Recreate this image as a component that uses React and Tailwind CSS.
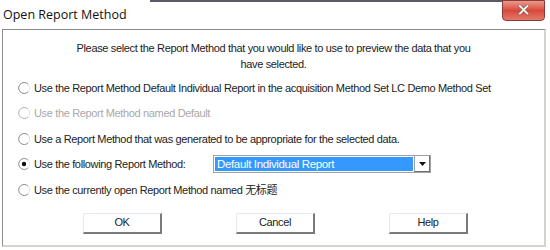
import React from 'react'

function Radio({ checked, disabled }) {
  return (
    <svg width="12" height="12" viewBox="0 0 12 12" className="shrink-0">
      <path d="M10.2 2.2A5.5 5.5 0 1 0 10.2 9.8" fill="none" stroke={disabled ? '#b0b0b0' : '#8a8a8a'} strokeWidth="1" />
      <path d="M10.2 2.2A5.5 5.5 0 0 1 10.2 9.8" fill="none" stroke="#e4e4e4" strokeWidth="1" />
      <circle cx="6" cy="6" r="4.3" fill="#fff" />
      {checked && <circle cx="6" cy="6" r="2.2" fill="#111" />}
    </svg>
  )
}

function Option({ checked, disabled, children }) {
  return (
    <div className="flex items-center h-[25.5px] pl-[15px]">
      <Radio checked={checked} disabled={disabled} />
      <span className={`ml-[4px] ${disabled ? 'text-[#a8a8a8]' : 'text-[#222]'}`}>{children}</span>
    </div>
  )
}

function Btn({ children }) {
  return (
    <button className="w-[79px] h-[21px] bg-white border-t border-l border-t-[#e8e8f4] border-l-[#e8e8f4] border-r-2 border-b-2 border-r-[#7a7a7a] border-b-[#7a7a7a] text-[11px] text-[#222]">
      {children}
    </button>
  )
}

export default function App() {
  return (
    <div className="w-[550px] h-[250px] bg-white overflow-hidden relative font-['Liberation_Sans','Noto_Sans_CJK_SC',sans-serif]">
      {/* top strip */}
      <div className="h-[2px] ml-[150px] mr-[8px] bg-[#5a5a6a]" />
      <div className="flex items-start justify-between h-[27px]">
        <div className="pl-[3px] pt-[4px] text-[12.5px] text-[#111] font-['Open_Sans',sans-serif] leading-[18px]">Open Report Method</div>
        <div className="mr-[5px] -mt-[2px] w-[43px] h-[21px] rounded-b-[4px] border border-[#8a3a3a] bg-gradient-to-b from-[#e89a8a] via-[#d8483a] to-[#e07a6a] flex items-center justify-center">
          <span className="text-white font-bold text-[17px] leading-none [text-shadow:0_0_1px_#444,0_0_1px_#444] font-['DejaVu_Sans',sans-serif]">✕</span>
        </div>
      </div>
      <div className="ml-[2px] mr-[4px] h-[218px] border-l border-t border-l-[#8c8c8c] border-t-[#8c8c8c] border-r-2 border-b-2 border-r-[#d4d4cc] border-b-[#d4d4cc] text-[11px] tracking-[-0.35px]">
        <div className="pt-[10px] text-center leading-[16px] text-[#222]">
          Please select the Report Method that you would like to use to preview the data that you
          <br />
          have selected.
        </div>
        <div className="mt-[3px]">
          <Option>Use the Report Method Default Individual Report in the acquisition Method Set LC Demo Method Set</Option>
          <Option disabled>Use the Report Method named Default</Option>
          <Option>Use a Report Method that was generated to be appropriate for the selected data.</Option>
          <div className="flex items-center h-[25.5px] pl-[15px]">
            <Radio checked />
            <span className="ml-[4px] text-[#222] w-[179px]">Use the following Report Method:</span>
            <div className="flex h-[18px] w-[218px] border border-[#a0a0a0] bg-white">
              <div className="flex-1 m-[1px] bg-[#3399ff] text-white leading-[14px] pl-[2px] text-[11.5px]">Default Individual Report</div>
              <div className="w-[16px] border-l border-[#a0a0a0] border-r border-b border-r-[#707070] border-b-[#707070] flex items-center justify-center">
                <svg width="7" height="4" viewBox="0 0 7 4"><path d="M0 0h7L3.5 4z" fill="#111" /></svg>
              </div>
            </div>
          </div>
          <Option>Use the currently open Report Method named 无标题</Option>
        </div>
        <div className="flex mt-[10px] pl-[80px] gap-[74px]">
          <Btn>OK</Btn>
          <Btn>Cancel</Btn>
          <Btn>Help</Btn>
        </div>
      </div>
    </div>
  )
}
